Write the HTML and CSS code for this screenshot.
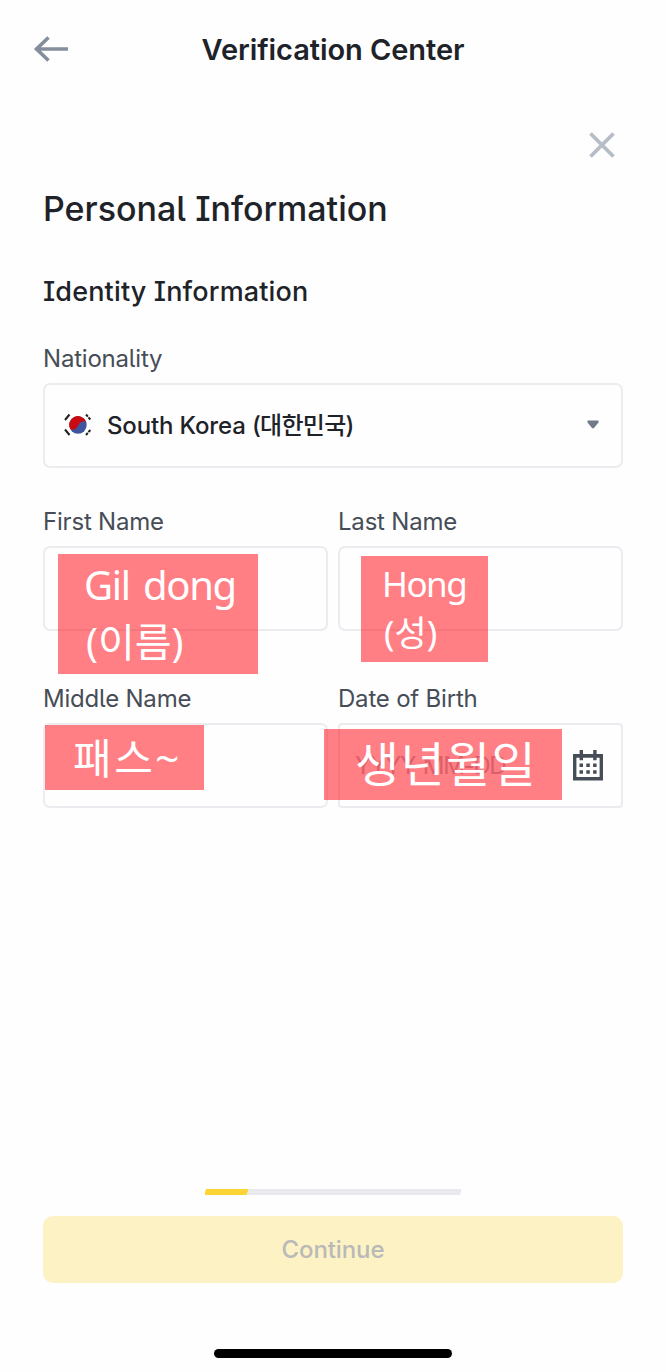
FILE: index.html
```html
<!DOCTYPE html>
<html lang="en">
<head>
<meta charset="utf-8">
<title>Verification Center</title>
<link rel="stylesheet" href="styles.css">
</head>
<body>
<div class="screen">
  <header class="header">
    <svg class="back" width="36" height="28" viewBox="0 0 36 28" fill="none" stroke="#848e9c" stroke-width="3.6"><path d="M35 14H4M15.500 2.500 3.500 14l12 11.500"/></svg>
    <div class="title"><span>Verification Center</span></div>
  </header>
  <main class="main">
    <div class="close-row">
      <svg width="28" height="28" viewBox="0 0 28 28" fill="none" stroke="#b7bdc6" stroke-width="3.8"><path d="M2.500 2.500l23 23M25.500 2.500l-23 23"/></svg>
    </div>
    <h1 class="heading"><span>Personal Information</span></h1>
    <h2 class="subheading"><span>Identity Information</span></h2>
    <div class="field">
      <div class="label"><span>Nationality</span></div>
      <div class="box select">
        <svg class="flag" width="28" height="24" viewBox="0 0 28 24">
          <circle cx="14" cy="12" r="8.700" fill="#3f559f"/>
          <path d="M6.600 16.500A8.700 8.700 0 1 1 22.100 8.900C19.500 7.600 16.200 8.700 14.500 12c-1.700 3.500-4.500 5.500-7.900 4.500z" fill="#c90a10"/>
          <g stroke="#222" stroke-width="2" fill="none"><path d="M1 7l4.500-5.500M1 16.500 5.500 22"/><path d="M22 1.500l4.800 5.500M22 22l4.800-5.500" stroke-dasharray="2.800 1"/></g>
        </svg>
        <span class="country">South Korea <span class="ko">(대한민국)</span></span>
        <svg class="caret" width="12" height="9" viewBox="0 0 12 9"><path d="M.5.500h11v2L6.800 8.200H5.200L.5 2.500z" fill="#707a8a"/></svg>
      </div>
    </div>
    <div class="row names">
      <div class="field">
        <div class="label"><span>First Name</span></div>
        <div class="box"><div class="note note-first"><span class="latin">Gil dong</span><span class="paren">(이름)</span></div></div>
      </div>
      <div class="field">
        <div class="label"><span>Last Name</span></div>
        <div class="box"><div class="note note-last"><span class="latin">Hong</span><span class="paren">(성)</span></div></div>
      </div>
    </div>
    <div class="row extra">
      <div class="field">
        <div class="label"><span>Middle Name</span></div>
        <div class="box"><div class="note note-middle"><span>패스~</span></div></div>
      </div>
      <div class="field">
        <div class="label"><span>Date of Birth</span></div>
        <div class="box date">
          <span class="placeholder">YYYY-MM-DD</span>
          <svg width="30" height="31" viewBox="0 0 30 31" fill="#474d57"><path fill-rule="evenodd" d="M0 4h30v26.500H0zM3.400 7.800v19.300h23.200V7.800z"/><path d="M6.600 0H10v10.300H6.600zM20.200 0h3.400v10.300h-3.400z"/><path d="M6.500 13.500H10V17H6.500zm6.800 0h3.500V17h-3.500zm6.800 0h3.500V17h-3.500zM6.500 20.300H10v3.500H6.500zm6.800 0h3.500v3.500h-3.500zm6.800 0h3.500v3.500h-3.500z"/></svg>
          <div class="note note-dob"><span>생년월일</span></div>
        </div>
      </div>
    </div>
  </main>
  <footer class="footer">
    <div class="progress"><div class="bar"></div></div>
    <div class="button"><span>Continue</span></div>
    <div class="home"></div>
  </footer>
</div>
</body>
</html>
```
FILE: styles.css
```css
* { box-sizing: border-box; }
body { margin: 0; background: #fefefe; font-family: Inter, "Noto Sans CJK KR", sans-serif; color: #1e2329; }
.screen { width: 666px; height: 1372px; display: flex; flex-direction: column; overflow: hidden; }
.header { height: 98px; flex: none; display: grid; grid-template-columns: 100px 1fr 100px; align-items: center; }
.back { margin-left: 33px; }
.title { text-align: center; font-size: 29px; font-weight: 600; white-space: nowrap; letter-spacing: -.07px; }
.main { flex: 1; padding: 0 43px; font-feature-settings: "cv08", "cv05"; }
.close-row { height: 87px; padding: 33px 7px 0 0; display: flex; justify-content: flex-end; }
.heading { margin: 0; line-height: 48px; font-size: 34px; font-weight: 550; letter-spacing: 0; white-space: nowrap; }
.subheading { margin: 41px 0 34px; line-height: 36px; font-size: 27px; font-weight: 550; letter-spacing: .15px; white-space: nowrap; }
.label { height: 30px; line-height: 30px; margin-bottom: 8.500px; font-size: 24px; letter-spacing: -.2px; color: #474d57; white-space: nowrap; }
.box { position: relative; height: 85px; border: 2px solid #eaecef; border-radius: 7px; background: #fefefe; display: flex; align-items: center; }
.select { padding: 0 22px 0 19px; }
.country { margin: -4px 0 0 15px; font-size: 24px; font-weight: 550; letter-spacing: -.15px; white-space: nowrap; }
.ko { letter-spacing: -.7px; }
.caret { margin: -2px 0 0 auto; }
.row { display: grid; grid-template-columns: 285px 285px; gap: 10px; }
.names { margin-top: 39.500px; }
.extra { margin-top: 53.500px; }
.date { padding: 0 18px 0 15px; justify-content: space-between; border-radius: 4px; }
.placeholder { font-size: 24px; letter-spacing: -1.300px; color: #b7bdc6; white-space: nowrap; }
/* Translucent annotations laid over the inputs */
.note { position: absolute; z-index: 1; background: rgba(255, 0, 11, .5); color: #fff; display: flex; flex-direction: column; white-space: nowrap; font-family: "Noto Sans", "Noto Sans CJK KR", sans-serif; font-weight: 400; font-feature-settings: normal; }
.note .paren { padding-left: 2px; margin-top: -1px; }
.note-first { left: 13px; top: 6px; width: 200px; height: 120px; padding: 2px 0 0 26px; font-size: 40px; line-height: 58px; }
.note-first .latin { word-spacing: 4px; letter-spacing: -1.300px; }
.note-last { left: 21px; top: 8px; width: 127px; height: 106px; padding: 3px 0 0 21px; font-size: 35px; line-height: 50px; }
.note-last .latin { letter-spacing: -1.500px; }
.note-middle { left: 0; top: 0; width: 159px; height: 65px; padding-left: 28px; font-size: 42px; line-height: 66px; letter-spacing: 2.500px; }
.note-dob { left: -16px; top: 4px; width: 238px; height: 71px; padding-left: 31px; font-size: 48px; line-height: 70px; letter-spacing: 1.300px; }
.footer { height: 183px; flex: none; display: flex; flex-direction: column; align-items: center; }
.progress { width: 257px; height: 6px; background: #eaeaee; clip-path: polygon(1.500px 0, 100% 0, 255.500px 100%, 0 100%); }
.bar { width: 44px; height: 6px; background: #fcd535; clip-path: polygon(0 0, 100% 0, 42px 100%, 0 100%); }
.button { width: 580px; height: 67px; margin-top: 21px; border-radius: 10px; background: #fdf2c3; color: #b9b9b9; font-size: 24px; font-weight: 500; display: flex; align-items: center; justify-content: center; letter-spacing: -.1px; }
.home { width: 238px; height: 9px; margin-top: 66px; border-radius: 5px; background: #000; }
```
